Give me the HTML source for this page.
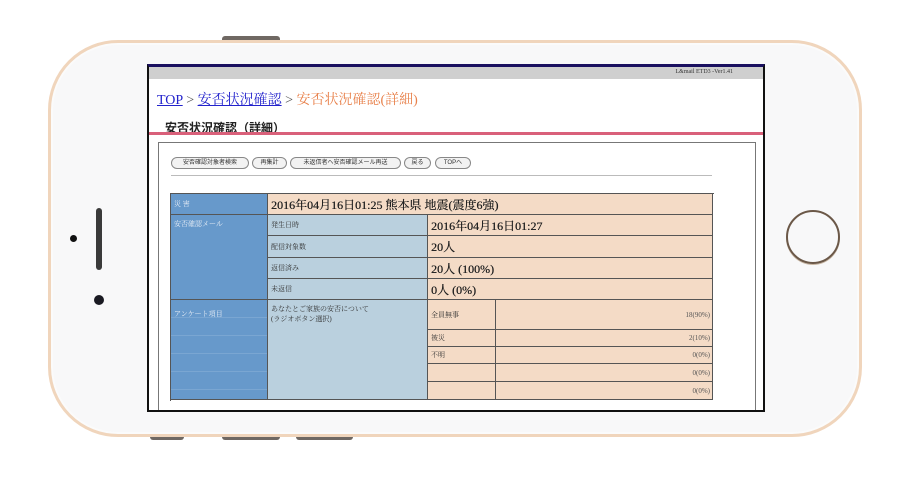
<!DOCTYPE html>
<html><head><meta charset="utf-8"><style>
*{margin:0;padding:0;box-sizing:border-box}
body{width:910px;height:478px;background:#fff;position:relative;overflow:hidden;font-family:"Liberation Serif","Noto Serif CJK SC",serif}
.a{position:absolute}
.phone{left:48px;top:40px;width:814px;height:397px;border:3px solid #f0d5bc;border-radius:70px;background:#f8f8f9;box-shadow:inset 0 0 0 2px #fbfbfb}
.btn{border-radius:3px 3px 0 0;background:#6f6863}
.screen{left:147px;top:64px;width:618px;height:348px;border:2px solid #111;border-top:3px solid #1a1060;background:#fff;overflow:hidden}
.bt{position:absolute;top:157px;height:12px;border:1px solid #888;border-radius:7px;background:#f2f2f2;font:6px "Liberation Sans","Noto Sans CJK JP",sans-serif;color:#333;text-align:center;line-height:10px;white-space:nowrap}
.c{position:absolute;border-right:1px solid #555;border-bottom:1px solid #555;font-family:"Liberation Serif","Noto Serif CJK JP",serif;white-space:nowrap;overflow:hidden;display:flex;align-items:center}
.d{background:#6799cb;color:#e8eef6;font-size:7px;padding:0 3px}
.l{background:#bad0de;color:#333;font-size:7px;padding:0 3px}
.p{background:#f4dbc6;color:#222;font-size:12px;padding:0 3px;text-shadow:0.3px 0 0 #222}
.s{background:#f4dbc6;color:#333;font-size:7px;padding:0 3px}
.r{background:#f4dbc6;color:#555;font-size:7px;padding:0 2px;justify-content:flex-end}
.top{align-items:flex-start;padding-top:4px}
</style></head><body>
<div class="a btn" style="left:222px;top:36px;width:58px;height:5px"></div>
<div class="a btn" style="left:150px;top:436px;width:34px;height:4px;border-radius:0 0 3px 3px"></div>
<div class="a btn" style="left:222px;top:436px;width:58px;height:4px;border-radius:0 0 3px 3px"></div>
<div class="a btn" style="left:296px;top:436px;width:57px;height:4px;border-radius:0 0 3px 3px"></div>
<div class="a phone"></div>
<div class="a" style="left:96px;top:208px;width:6px;height:62px;border-radius:3px;background:#3a3a3a"></div>
<div class="a" style="left:70px;top:235px;width:7px;height:7px;border-radius:50%;background:#111"></div>
<div class="a" style="left:94px;top:295px;width:10px;height:10px;border-radius:50%;background:#1a1a22"></div>
<div class="a" style="left:786px;top:210px;width:54px;height:54px;border-radius:50%;border:2px solid #6b5848;box-shadow:0 1px 0 #c9b7a3"></div>
<div class="a screen">
 <div class="a" style="left:0;top:0;width:100%;height:12px;background:#cfcfcf"></div>
 <div class="a" style="right:30px;top:2px;font-size:6px;color:#333">L&amp;mail ETD3 -Ver1.41</div>
 <div class="a" style="left:8px;top:22px;font-size:14px;color:#555;white-space:nowrap"><span style="color:#2222cc;text-decoration:underline">TOP</span> &gt; <span style="color:#2222cc;text-decoration:underline">安否状況確認</span> &gt; <span style="color:#e8804a">安否状況確認(詳細)</span></div>
 <div class="a" style="left:16px;top:52px;font:bold 12px 'Liberation Sans','Noto Sans CJK JP',sans-serif;color:#222">安否状況確認（詳細）</div>
 <div class="a" style="left:0;top:65px;width:100%;height:3px;background:#d9607a"></div>
 <div class="a" style="left:9px;top:75px;width:598px;height:300px;border:1px solid #777"></div>
</div>
<div class="bt" style="left:171px;width:78px">安否確認対象者検索</div>
<div class="bt" style="left:252px;width:35px">再集計</div>
<div class="bt" style="left:290px;width:111px">未返信者へ安否確認メール再送</div>
<div class="bt" style="left:404px;width:27px">戻る</div>
<div class="bt" style="left:435px;width:36px">TOPへ</div>
<div class="a" style="left:171px;top:175px;width:541px;height:1px;background:#bbb"></div>
<div class="a" style="left:170px;top:193px;width:544px;height:208px;border-top:1px solid #555;border-left:1px solid #555"></div>
<div class="c d" style="left:171px;top:194px;width:97px;height:21px">災 害</div>
<div class="c p" style="left:268px;top:194px;width:445px;height:21px">2016年04月16日01:25 熊本県 地震(震度6強)</div>
<div class="c d top" style="left:171px;top:215px;width:97px;height:85px">安否確認メール</div>
<div class="c l" style="left:268px;top:215px;width:160px;height:21px">発生日時</div>
<div class="c p" style="left:428px;top:215px;width:285px;height:21px">2016年04月16日01:27</div>
<div class="c l" style="left:268px;top:236px;width:160px;height:22px">配信対象数</div>
<div class="c p" style="left:428px;top:236px;width:285px;height:22px">20人</div>
<div class="c l" style="left:268px;top:258px;width:160px;height:21px">返信済み</div>
<div class="c p" style="left:428px;top:258px;width:285px;height:21px">20人 (100%)</div>
<div class="c l" style="left:268px;top:279px;width:160px;height:21px">未返信</div>
<div class="c p" style="left:428px;top:279px;width:285px;height:21px">0人 (0%)</div>
<div class="c d top" style="left:171px;top:300px;width:97px;height:100px;padding-top:9px;background:repeating-linear-gradient(#6799cb 0 17px,#7aa6d2 17px 18px)">アンケート項目</div>
<div class="c l top" style="left:268px;top:300px;width:160px;height:100px;line-height:10px;display:block">あなたとご家族の安否について<br>(ラジオボタン選択)</div>
<div class="c s" style="left:428px;top:300px;width:68px;height:30px">全員無事</div>
<div class="c r" style="left:496px;top:300px;width:217px;height:30px">18(90%)</div>
<div class="c s" style="left:428px;top:330px;width:68px;height:17px">被災</div>
<div class="c r" style="left:496px;top:330px;width:217px;height:17px">2(10%)</div>
<div class="c s" style="left:428px;top:347px;width:68px;height:17px">不明</div>
<div class="c r" style="left:496px;top:347px;width:217px;height:17px">0(0%)</div>
<div class="c s" style="left:428px;top:364px;width:68px;height:18px"></div>
<div class="c r" style="left:496px;top:364px;width:217px;height:18px">0(0%)</div>
<div class="c s" style="left:428px;top:382px;width:68px;height:18px"></div>
<div class="c r" style="left:496px;top:382px;width:217px;height:18px">0(0%)</div>
</body></html>
